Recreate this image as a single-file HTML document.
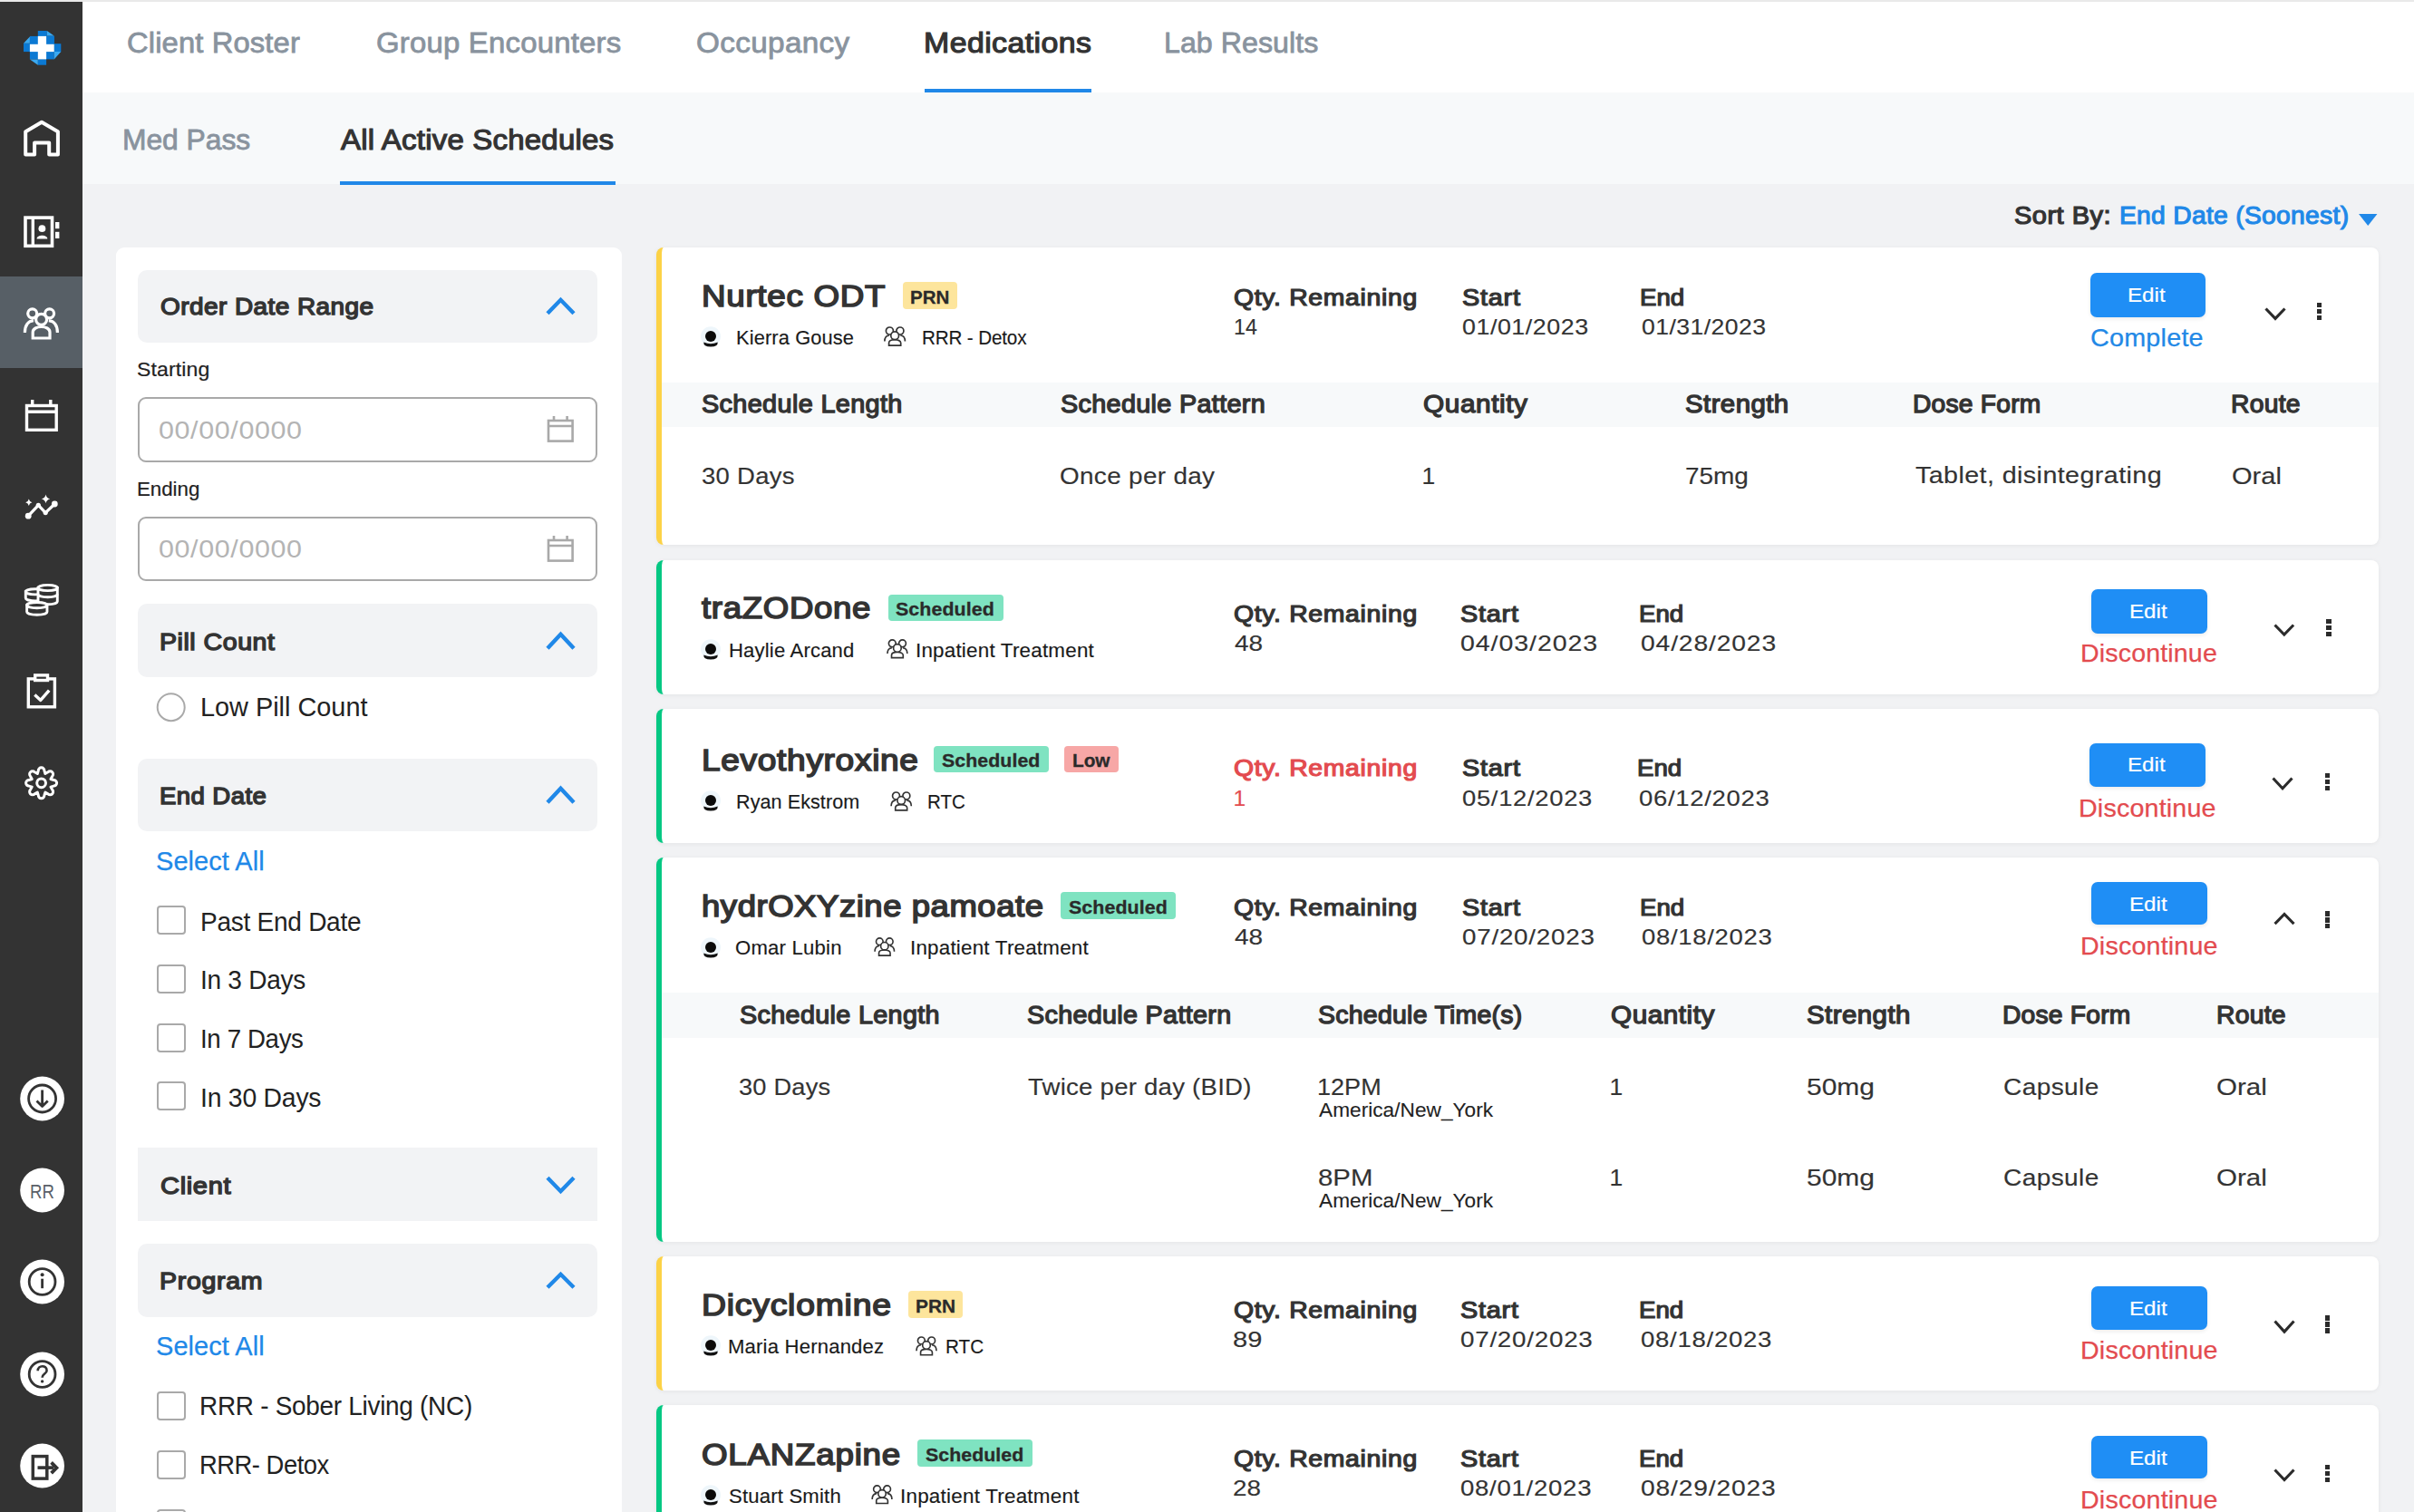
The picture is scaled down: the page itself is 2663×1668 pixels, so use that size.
<!DOCTYPE html>
<html><head><meta charset="utf-8"><title>Medications</title><style>
html,body{margin:0;padding:0}
body{width:2663px;height:1668px;overflow:hidden;position:relative;background:#f1f2f4;font-family:"Liberation Sans",sans-serif}
.t{position:absolute;white-space:nowrap;line-height:1}
.r{position:absolute}
</style></head><body>
<div class="r" style="left:91.0px;top:0.0px;width:2572.0px;height:102.0px;background:#ffffff;"></div>
<div class="r" style="left:0.0px;top:0.0px;width:2663.0px;height:1.5px;background:#e9e9e9;"></div>
<div class="r" style="left:91.0px;top:102.0px;width:2572.0px;height:101.0px;background:#f7f9fa;"></div>
<div class="r" style="left:0.0px;top:2.0px;width:91.0px;height:1666.0px;background:#333333;"></div>
<div class="r" style="left:0.0px;top:305.0px;width:91.0px;height:101.0px;background:#575f66;"></div>
<div class="t" style="left:140.4px;top:30.9px;font-size:32.00px;letter-spacing:0.14px;font-weight:normal;color:#89939e;-webkit-text-stroke:0.8px #89939e;transform:scaleX(1.0224);transform-origin:0 0;">Client Roster</div>
<div class="t" style="left:415.4px;top:30.9px;font-size:32.00px;letter-spacing:0.20px;font-weight:normal;color:#89939e;-webkit-text-stroke:0.8px #89939e;transform:scaleX(1.0285);transform-origin:0 0;">Group Encounters</div>
<div class="t" style="left:768.4px;top:30.9px;font-size:32.00px;letter-spacing:0.33px;font-weight:normal;color:#89939e;-webkit-text-stroke:0.8px #89939e;transform:scaleX(1.0401);transform-origin:0 0;">Occupancy</div>
<div class="t" style="left:1018.5px;top:30.9px;font-size:32.00px;letter-spacing:0.40px;font-weight:normal;color:#333;-webkit-text-stroke:1.2px #333;transform:scaleX(1.0586);transform-origin:0 0;">Medications</div>
<div class="t" style="left:1284.4px;top:30.9px;font-size:32.00px;letter-spacing:0.04px;font-weight:normal;color:#89939e;-webkit-text-stroke:0.8px #89939e;transform:scaleX(1.0051);transform-origin:0 0;">Lab Results</div>
<div class="r" style="left:1020.0px;top:98.0px;width:184.0px;height:4.0px;background:#2088e8;"></div>
<div class="t" style="left:135.4px;top:138.3px;font-size:32.00px;letter-spacing:-0.05px;font-weight:normal;color:#89939e;-webkit-text-stroke:0.8px #89939e;transform:scaleX(0.9946);transform-origin:0 0;">Med Pass</div>
<div class="t" style="left:375.6px;top:138.3px;font-size:32.00px;letter-spacing:0.20px;font-weight:normal;color:#333;-webkit-text-stroke:1.2px #333;transform:scaleX(1.0312);transform-origin:0 0;">All Active Schedules</div>
<div class="r" style="left:375.0px;top:200.0px;width:304.0px;height:4.0px;background:#2088e8;"></div>
<div class="t" style="left:2221.5px;top:225.4px;font-size:26.71px;letter-spacing:0.44px;font-weight:normal;color:#333;-webkit-text-stroke:1.2px #333;transform:scaleX(1.0860);transform-origin:0 0;">Sort By:</div>
<div class="t" style="left:2338.4px;top:225.4px;font-size:26.71px;letter-spacing:0.31px;font-weight:normal;color:#2088e8;-webkit-text-stroke:1.1px #2088e8;transform:scaleX(1.0552);transform-origin:0 0;">End Date (Soonest)</div>
<svg class="r" style="left:2600.5px;top:236.0px;width:22.5px;height:13.0px;" viewBox="0 0 22 14"><path d="M0 0H22L11 14Z" fill="#2088e8"/></svg>
<svg class="r" style="left:22.0px;top:28.0px;width:50.0px;height:50.0px;" viewBox="0 0 50 50">
<rect x="10.9" y="11.9" width="26.8" height="25.5" fill="#0b79d3"/>
<rect x="19.8" y="6" width="10" height="6.2" fill="#0b79d3"/>
<rect x="29.8" y="11.6" width="8" height="8.8" fill="#0b79d3"/>
<rect x="37.5" y="20.2" width="7.8" height="9" fill="#0b79d3"/>
<rect x="19.8" y="37.2" width="9.3" height="6.5" fill="#0b79d3"/>
<rect x="4" y="19.8" width="7.1" height="9.3" fill="#0b79d3"/>
<path d="M29.8 6L37.7 11.6H29.8Z M45.3 29.1L37.7 37.4V29.1Z M19.8 43.7L10.9 37.4H19.8Z M4 19.8L10.9 12.6V19.8Z" fill="#3aa9f2"/>
<rect x="19.8" y="11.9" width="9.3" height="25.5" fill="#fff"/>
<rect x="10.9" y="20.8" width="26.8" height="8.3" fill="#fff"/>
</svg>
<svg class="r" style="left:20.0px;top:128.0px;width:52.0px;height:50.0px;" viewBox="20 128 52 50"><path d="M28.2 170.5V145.2L46 134.8L63.9 145.2V170.5H54.2V157.4H38.1V170.5Z" fill="none" stroke="#fff" stroke-width="4" stroke-linejoin="round"/></svg>
<svg class="r" style="left:20.0px;top:232.0px;width:52.0px;height:48.0px;" viewBox="20 232 52 48"><rect x="28" y="240.1" width="29.5" height="31.2" fill="none" stroke="#fff" stroke-width="3.6"/><rect x="34.6" y="240" width="3.4" height="31" fill="#fff"/><circle cx="46.4" cy="252.2" r="3.9" fill="#fff"/><path d="M40.6 263.6C40.6 258.6 52.3 258.6 52.3 263.6Z" fill="#fff"/><rect x="61" y="245" width="4.4" height="7.2" fill="#fff"/><rect x="61" y="255.8" width="4.4" height="7.2" fill="#fff"/></svg>
<svg class="r" style="left:20.0px;top:334.0px;width:52.0px;height:46.0px;" viewBox="20 334 52 46"><g fill="none" stroke="#fff" stroke-width="3.2"><circle cx="35.7" cy="345.8" r="5"/><circle cx="54.6" cy="345.8" r="5"/><path d="M27.4 367C27.4 359 31 354 37 353.6"/><path d="M63.4 367C63.4 359 59.8 354 53.8 353.6"/><path d="M36.2 373V366.5C36.2 358.5 55 358.5 55 366.5V373Z" fill="#575f66"/><circle cx="45.6" cy="352.4" r="6" fill="#575f66"/></g></svg>
<svg class="r" style="left:20.0px;top:436.0px;width:52.0px;height:46.0px;" viewBox="20 436 52 46"><g fill="none" stroke="#fff" stroke-width="3.4"><rect x="29.5" y="447.5" width="32.7" height="26.8"/><path d="M29.5 454.2H62.2M35.7 441V448M55.8 441V448"/></g></svg>
<svg class="r" style="left:20.0px;top:540.0px;width:52.0px;height:40.0px;" viewBox="20 540 52 40"><g fill="none" stroke="#fff" stroke-width="3.2" stroke-linejoin="round"><path d="M31.2 569.2L42.3 557.3L50.2 565.6L60.3 556"/></g><circle cx="31.2" cy="569.2" r="3.4" fill="#fff"/><circle cx="42.3" cy="557.3" r="2.6" fill="#fff"/><circle cx="50.2" cy="565.6" r="2.6" fill="#fff"/><circle cx="60.3" cy="556" r="3.4" fill="#fff"/><path d="M31.8 550.6Q32.4 553.6 35.4 554.3Q32.4 555 31.8 558Q31.2 555 28.2 554.3Q31.2 553.6 31.8 550.6Z" fill="#fff"/><path d="M50.5 545.5Q51.2 549.6 55.2 550.4Q51.2 551.2 50.5 555.3Q49.8 551.2 45.8 550.4Q49.8 549.6 50.5 545.5Z" fill="#fff"/></svg>
<svg class="r" style="left:20.0px;top:636.0px;width:52.0px;height:52.0px;" viewBox="20 636 52 52"><g stroke="#fff" stroke-width="2.9" fill="#333"><path d="M28.3 652.8V659.8A10.7 3.1 0 0 0 49.7 659.8V652.8Z"/><ellipse cx="39" cy="652.8" rx="10.7" ry="3.1"/><path d="M42 648.5V663.6A10.65 3.1 0 0 0 63.3 663.6V648.5Z"/><ellipse cx="52.65" cy="648.5" rx="10.65" ry="3.1"/><path d="M42 655.6A10.65 3.1 0 0 0 63.3 655.6" fill="none"/><path d="M29.65 667.6V675.1A11.15 3.1 0 0 0 51.95 675.1V667.6Z"/><ellipse cx="40.8" cy="667.6" rx="11.15" ry="3.1"/></g></svg>
<svg class="r" style="left:20.0px;top:738.0px;width:52.0px;height:50.0px;" viewBox="20 738 52 50"><g fill="none" stroke="#fff" stroke-width="3.4"><rect x="31.3" y="748.9" width="29.1" height="30.9"/><rect x="38.7" y="744.9" width="13.8" height="5.6" fill="#333"/><path d="M38.3 766.6L44.8 772.4L54.2 761.6" stroke-linejoin="round"/></g></svg>
<svg class="r" style="left:20.0px;top:838.0px;width:52.0px;height:52.0px;" viewBox="20 838 52 52"><path d="M42.30 850.10A3.3 3.3 0 0 1 48.90 850.10L49.89 853.45L52.95 851.78A3.3 3.3 0 0 1 57.62 856.45L55.95 859.51L59.30 860.50A3.3 3.3 0 0 1 59.30 867.10L55.95 868.09L57.62 871.15A3.3 3.3 0 0 1 52.95 875.82L49.89 874.15L48.90 877.50A3.3 3.3 0 0 1 42.30 877.50L41.31 874.15L38.25 875.82A3.3 3.3 0 0 1 33.58 871.15L35.25 868.09L31.90 867.10A3.3 3.3 0 0 1 31.90 860.50L35.25 859.51L33.58 856.45A3.3 3.3 0 0 1 38.25 851.78L41.31 853.45Z" fill="none" stroke="#fff" stroke-width="3" stroke-linejoin="round"/><circle cx="45.6" cy="863.8" r="4.9" fill="none" stroke="#fff" stroke-width="3"/></svg>
<svg class="r" style="left:18.0px;top:1182.5px;width:58.0px;height:58.0px;" viewBox="18 1182.5 58 58"><circle cx="46.6" cy="1211.5" r="24.4" fill="#fff"/><circle cx="46.6" cy="1211.5" r="15" fill="none" stroke="#333" stroke-width="2.8"/><path d="M46.6 1202V1220M40.5 1214L46.6 1220L52.7 1214" fill="none" stroke="#333" stroke-width="2.8" stroke-linejoin="round"/></svg>
<svg class="r" style="left:18.0px;top:1284.2px;width:58.0px;height:58.0px;" viewBox="18 1284.2 58 58"><circle cx="46.6" cy="1313.2" r="24.4" fill="#fff"/></svg>
<div class="t" style="left:32.8px;top:1303.0px;font-size:22.86px;letter-spacing:0.00px;font-weight:normal;color:#5a6068;transform:scaleX(0.8125);transform-origin:0 0;">RR</div>
<svg class="r" style="left:18.0px;top:1385.3px;width:58.0px;height:58.0px;" viewBox="18 1385.3 58 58"><circle cx="46.6" cy="1414.3" r="24.4" fill="#fff"/><circle cx="46.6" cy="1414.3" r="14.4" fill="none" stroke="#333" stroke-width="2.8"/><circle cx="46.6" cy="1406.6" r="2" fill="#333"/><rect x="45.2" y="1411" width="2.8" height="10.5" fill="#333"/></svg>
<svg class="r" style="left:18.0px;top:1486.9px;width:58.0px;height:58.0px;" viewBox="18 1486.9 58 58"><circle cx="46.6" cy="1515.9" r="24.4" fill="#fff"/><circle cx="46.6" cy="1515.9" r="14.4" fill="none" stroke="#333" stroke-width="2.8"/><path d="M41.7 1512.2C41.7 1505.5 51.6 1505.5 51.6 1511.8C51.6 1515.6 46.6 1515.4 46.6 1519.6" fill="none" stroke="#333" stroke-width="2.6"/><circle cx="46.6" cy="1523.8" r="1.7" fill="#333"/></svg>
<svg class="r" style="left:18.0px;top:1588.0px;width:58.0px;height:58.0px;" viewBox="18 1588 58 58"><circle cx="46.6" cy="1617" r="24.4" fill="#fff"/><rect x="36.3" y="1606.6" width="15.5" height="24.5" fill="none" stroke="#333" stroke-width="3.5"/><path d="M41.5 1619.1H59" stroke="#333" stroke-width="3.6"/><path d="M56.6 1613.4L62.4 1619.3L56.6 1625.2" fill="none" stroke="#333" stroke-width="3.8"/></svg>
<div class="r" style="left:128.0px;top:272.8px;width:558.0px;height:1427.2px;background:#ffffff;border-radius:9px;"></div>
<div class="r" style="left:152.0px;top:298.0px;width:507.0px;height:80.0px;background:#f2f3f5;border-radius:10px;"></div>
<div class="t" style="left:177.1px;top:325.4px;font-size:26.00px;letter-spacing:0.42px;font-weight:normal;color:#333;-webkit-text-stroke:1.4px #333;transform:scaleX(1.0750);transform-origin:0 0;">Order Date Range</div>
<svg class="r" style="left:600.0px;top:326.0px;width:37.0px;height:24.0px;" viewBox="600 326 37 24"><path d="M604 345.8L618.5 330.8L633 345.8" fill="none" stroke="#2088e8" stroke-width="4.4"/></svg>
<div class="t" style="left:151.1px;top:396.6px;font-size:22.43px;letter-spacing:0.13px;font-weight:normal;color:#222;-webkit-text-stroke:0.2px #222;transform:scaleX(1.0277);transform-origin:0 0;">Starting</div>
<div class="r" style="left:152.0px;top:438.0px;width:507.0px;height:71.5px;background:#fff;border:2px solid #a9a9a9;border-radius:9px;box-sizing:border-box;"></div>
<div class="t" style="left:174.5px;top:460.6px;font-size:27.86px;letter-spacing:0.56px;font-weight:normal;color:#b4b4b4;transform:scaleX(1.0937);transform-origin:0 0;">00/00/0000</div>
<svg class="r" style="left:600.0px;top:457.0px;width:37.0px;height:34.0px;" viewBox="600 457 37 34"><g fill="none" stroke="#a9a9a9" stroke-width="2.6"><rect x="605" y="464" width="26.6" height="22.6"/><path d="M605 470H631.6M611 459V465M625.6 459V465"/></g></svg>
<div class="t" style="left:151.1px;top:528.6px;font-size:22.43px;letter-spacing:-0.03px;font-weight:normal;color:#222;-webkit-text-stroke:0.2px #222;transform:scaleX(0.9944);transform-origin:0 0;">Ending</div>
<div class="r" style="left:152.0px;top:569.6px;width:507.0px;height:71.4px;background:#fff;border:2px solid #a9a9a9;border-radius:9px;box-sizing:border-box;"></div>
<div class="t" style="left:174.5px;top:592.4px;font-size:27.86px;letter-spacing:0.56px;font-weight:normal;color:#b4b4b4;transform:scaleX(1.0937);transform-origin:0 0;">00/00/0000</div>
<svg class="r" style="left:600.0px;top:588.5px;width:37.0px;height:34.0px;" viewBox="600 588.5 37 34"><g fill="none" stroke="#a9a9a9" stroke-width="2.6"><rect x="605" y="595.5" width="26.6" height="22.6"/><path d="M605 601.5H631.6M611 590.5V596.5M625.6 590.5V596.5"/></g></svg>
<div class="r" style="left:152.0px;top:666.0px;width:507.0px;height:81.0px;background:#f2f3f5;border-radius:10px;"></div>
<div class="t" style="left:176.0px;top:695.4px;font-size:26.00px;letter-spacing:0.47px;font-weight:normal;color:#333;-webkit-text-stroke:1.4px #333;transform:scaleX(1.0989);transform-origin:0 0;">Pill Count</div>
<svg class="r" style="left:600.0px;top:694.6px;width:37.0px;height:24.4px;" viewBox="600 694.6 37 24.399999999999977"><path d="M604 714.8L618.5 699.4L633 714.8" fill="none" stroke="#2088e8" stroke-width="4.4"/></svg>
<svg class="r" style="left:170.0px;top:762.0px;width:38.0px;height:36.0px;" viewBox="170 762 38 36"><circle cx="188.7" cy="780.2" r="15" fill="none" stroke="#a9a9a9" stroke-width="2"/></svg>
<div class="t" style="left:220.6px;top:766.1px;font-size:29.00px;letter-spacing:-0.02px;font-weight:normal;color:#222;transform:scaleX(0.9965);transform-origin:0 0;">Low Pill Count</div>
<div class="r" style="left:152.0px;top:836.5px;width:507.0px;height:80.5px;background:#f2f3f5;border-radius:10px;"></div>
<div class="t" style="left:176.1px;top:865.4px;font-size:26.00px;letter-spacing:0.37px;font-weight:normal;color:#333;-webkit-text-stroke:1.4px #333;transform:scaleX(1.0611);transform-origin:0 0;">End Date</div>
<svg class="r" style="left:600.0px;top:865.0px;width:37.0px;height:24.5px;" viewBox="600 865 37 24.5"><path d="M604 885.3L618.5 869.8L633 885.3" fill="none" stroke="#2088e8" stroke-width="4.4"/></svg>
<div class="t" style="left:172.1px;top:936.4px;font-size:28.86px;letter-spacing:0.03px;font-weight:normal;color:#2088e8;-webkit-text-stroke:0.25px #2088e8;transform:scaleX(1.0051);transform-origin:0 0;">Select All</div>
<div class="r" style="left:172.6px;top:999.0px;width:32.2px;height:32.2px;background:#fff;border:2px solid #a9a9a9;border-radius:4px;box-sizing:border-box;"></div>
<div class="t" style="left:220.7px;top:1001.8px;font-size:29.29px;letter-spacing:-0.29px;font-weight:normal;color:#222;transform:scaleX(0.9580);transform-origin:0 0;">Past End Date</div>
<div class="r" style="left:172.6px;top:1063.6px;width:32.2px;height:32.2px;background:#fff;border:2px solid #a9a9a9;border-radius:4px;box-sizing:border-box;"></div>
<div class="t" style="left:220.7px;top:1066.4px;font-size:29.29px;letter-spacing:-0.29px;font-weight:normal;color:#222;transform:scaleX(0.9575);transform-origin:0 0;">In 3 Days</div>
<div class="r" style="left:172.6px;top:1128.5px;width:32.2px;height:32.2px;background:#fff;border:2px solid #a9a9a9;border-radius:4px;box-sizing:border-box;"></div>
<div class="t" style="left:220.7px;top:1131.2px;font-size:29.29px;letter-spacing:-0.38px;font-weight:normal;color:#222;transform:scaleX(0.9442);transform-origin:0 0;">In 7 Days</div>
<div class="r" style="left:172.6px;top:1193.0px;width:32.2px;height:32.2px;background:#fff;border:2px solid #a9a9a9;border-radius:4px;box-sizing:border-box;"></div>
<div class="t" style="left:220.7px;top:1195.8px;font-size:29.29px;letter-spacing:-0.22px;font-weight:normal;color:#222;transform:scaleX(0.9677);transform-origin:0 0;">In 30 Days</div>
<div class="r" style="left:152.0px;top:1266.2px;width:507.0px;height:81.2px;background:#f2f3f5;border-radius:0px;"></div>
<div class="t" style="left:177.1px;top:1295.1px;font-size:26.00px;letter-spacing:0.59px;font-weight:normal;color:#333;-webkit-text-stroke:1.4px #333;transform:scaleX(1.1168);transform-origin:0 0;">Client</div>
<svg class="r" style="left:600.0px;top:1295.0px;width:37.0px;height:24.0px;" viewBox="600 1295 37 24"><path d="M604 1299.2L618.5 1314.2L633 1299.2" fill="none" stroke="#2088e8" stroke-width="4.4"/></svg>
<div class="r" style="left:152.0px;top:1372.0px;width:507.0px;height:80.5px;background:#f2f3f5;border-radius:10px;"></div>
<div class="t" style="left:176.0px;top:1400.4px;font-size:26.00px;letter-spacing:0.62px;font-weight:normal;color:#333;-webkit-text-stroke:1.4px #333;transform:scaleX(1.0988);transform-origin:0 0;">Program</div>
<svg class="r" style="left:600.0px;top:1400.8px;width:37.0px;height:23.4px;" viewBox="600 1400.8 37 23.40000000000009"><path d="M604 1420.0L618.5 1405.6L633 1420.0" fill="none" stroke="#2088e8" stroke-width="4.4"/></svg>
<div class="t" style="left:172.1px;top:1471.1px;font-size:28.86px;letter-spacing:0.03px;font-weight:normal;color:#2088e8;-webkit-text-stroke:0.25px #2088e8;transform:scaleX(1.0051);transform-origin:0 0;">Select All</div>
<div class="r" style="left:172.6px;top:1535.0px;width:32.2px;height:32.2px;background:#fff;border:2px solid #a9a9a9;border-radius:4px;box-sizing:border-box;"></div>
<div class="t" style="left:220.4px;top:1535.9px;font-size:29.29px;letter-spacing:-0.30px;font-weight:normal;color:#222;transform:scaleX(0.9545);transform-origin:0 0;">RRR - Sober Living (NC)</div>
<div class="r" style="left:172.6px;top:1599.5px;width:32.2px;height:32.2px;background:#fff;border:2px solid #a9a9a9;border-radius:4px;box-sizing:border-box;"></div>
<div class="t" style="left:220.4px;top:1601.0px;font-size:29.29px;letter-spacing:-0.52px;font-weight:normal;color:#222;transform:scaleX(0.9351);transform-origin:0 0;">RRR- Detox</div>
<div class="r" style="left:172.6px;top:1664.5px;width:32.2px;height:32.2px;background:#fff;border:2px solid #a9a9a9;border-radius:4px;box-sizing:border-box;"></div>
<div class="r" style="left:723.6px;top:272.6px;width:1900.4px;height:328.8px;background:#fff;border-left:6.3px solid #fcd246;border-radius:8px;box-sizing:border-box;box-shadow:0 1px 5px rgba(0,0,0,0.06);"></div>
<div class="t" style="left:773.5px;top:309.3px;font-size:34.14px;letter-spacing:0.63px;font-weight:normal;color:#333333;-webkit-text-stroke:1.6px #333333;transform:scaleX(1.0790);transform-origin:0 0;">Nurtec ODT</div>
<div class="r" style="left:995.6px;top:310.7px;width:60.5px;height:29.9px;background:#fde59c;border-radius:4px;"></div>
<div class="t" style="left:1004.4px;top:317.1px;font-size:21.14px;letter-spacing:0.00px;font-weight:bold;color:#2a2a2a;-webkit-text-stroke:0.3px #2a2a2a;transform:scaleX(0.9729);transform-origin:0 0;">PRN</div>
<svg class="r" style="left:771.7px;top:359.3px;width:24.0px;height:25.0px;" viewBox="771.7 359.3 24 25"><circle cx="783.7" cy="371.6" r="11" fill="#eef6fb"/><circle cx="783.7" cy="371.3" r="6" fill="#0a0a0a"/><path d="M776.0 377.8Q783.7 381.1 791.4000000000001 377.8Q791.9000000000001 382.90000000000003 783.7 382.90000000000003Q775.5 382.90000000000003 776.0 377.8Z" fill="#111"/></svg>
<div class="t" style="left:811.7px;top:363.2px;font-size:21.29px;letter-spacing:0.12px;font-weight:normal;color:#1a1a1a;-webkit-text-stroke:0.15px #1a1a1a;transform:scaleX(1.0261);transform-origin:0 0;">Kierra Gouse</div>
<svg class="r" style="left:974.3px;top:359.0px;width:26.3px;height:24.0px;" viewBox="-1 -1 26.3 24"><g fill="none" stroke="#333" stroke-width="1.7"><circle cx="6.4" cy="5" r="4"/><circle cx="17.9" cy="5" r="4"/><path d="M0.9 16.5C0.9 12.5 3 10.2 6 10"/><path d="M23.4 16.5C23.4 12.5 21.3 10.2 18.3 10"/><path d="M5.6 21.2V18.2C5.6 13.6 18.7 13.6 18.7 18.2V21.2Z" fill="#fff"/><circle cx="12.15" cy="10.2" r="4.4" fill="#fff"/></g></svg>
<div class="t" style="left:1016.8px;top:363.2px;font-size:21.29px;letter-spacing:-0.16px;font-weight:normal;color:#1a1a1a;-webkit-text-stroke:0.15px #1a1a1a;transform:scaleX(0.9707);transform-origin:0 0;">RRR - Detox</div>
<div class="t" style="left:1360.7px;top:315.7px;font-size:25.43px;letter-spacing:0.59px;font-weight:normal;color:#333333;-webkit-text-stroke:1.2px #333333;transform:scaleX(1.1171);transform-origin:0 0;">Qty. Remaining</div>
<div class="t" style="left:1360.6px;top:349.1px;font-size:24.57px;letter-spacing:0.00px;font-weight:normal;color:#333333;-webkit-text-stroke:0.15px #333333;transform:scaleX(0.9450);transform-origin:0 0;">14</div>
<div class="t" style="left:1612.5px;top:315.7px;font-size:25.43px;letter-spacing:0.67px;font-weight:normal;color:#333333;-webkit-text-stroke:1.2px #333333;transform:scaleX(1.1354);transform-origin:0 0;">Start</div>
<div class="t" style="left:1613.4px;top:349.1px;font-size:24.57px;letter-spacing:0.49px;font-weight:normal;color:#333333;-webkit-text-stroke:0.15px #333333;transform:scaleX(1.0920);transform-origin:0 0;">01/01/2023</div>
<div class="t" style="left:1809.0px;top:315.7px;font-size:25.43px;letter-spacing:0.00px;font-weight:normal;color:#333333;-webkit-text-stroke:1.2px #333333;transform:scaleX(1.0880);transform-origin:0 0;">End</div>
<div class="t" style="left:1811.0px;top:349.1px;font-size:24.57px;letter-spacing:0.43px;font-weight:normal;color:#333333;-webkit-text-stroke:0.15px #333333;transform:scaleX(1.0806);transform-origin:0 0;">01/31/2023</div>
<div class="r" style="left:2305.5px;top:301.2px;width:127.6px;height:48.7px;background:#1f8ef5;border-radius:7px;box-shadow:0 2px 4px rgba(0,0,0,0.08);"></div>
<div class="t" style="left:2347.3px;top:315.1px;font-size:21.71px;letter-spacing:0.00px;font-weight:normal;color:#fff;-webkit-text-stroke:0.2px #fff;transform:scaleX(1.1136);transform-origin:0 0;">Edit</div>
<div class="t" style="left:2306.3px;top:358.9px;font-size:27.86px;letter-spacing:0.22px;font-weight:normal;color:#2288e6;-webkit-text-stroke:0.25px #2288e6;transform:scaleX(1.0316);transform-origin:0 0;">Complete</div>
<svg class="r" style="left:2495.0px;top:336.0px;width:30.0px;height:19.9px;" viewBox="2495 336 30 19.899999999999977"><path d="M2499.5 340.5L2510.0 351.4L2520.5 340.5" fill="none" stroke="#2b2b2b" stroke-width="3.1"/></svg>
<div class="r" style="left:2556.0px;top:334.3px;width:5.4px;height:5.2px;background:#2b2b2b;"></div>
<div class="r" style="left:2556.0px;top:341.1px;width:5.4px;height:5.2px;background:#2b2b2b;"></div>
<div class="r" style="left:2556.0px;top:348.0px;width:5.4px;height:5.2px;background:#2b2b2b;"></div>
<div class="r" style="left:723.6px;top:618.0px;width:1900.4px;height:147.8px;background:#fff;border-left:6.3px solid #05c883;border-radius:8px;box-sizing:border-box;box-shadow:0 1px 5px rgba(0,0,0,0.06);"></div>
<div class="t" style="left:774.3px;top:653.4px;font-size:34.14px;letter-spacing:0.61px;font-weight:normal;color:#333333;-webkit-text-stroke:1.6px #333333;transform:scaleX(1.0734);transform-origin:0 0;">traZODone</div>
<div class="r" style="left:979.6px;top:655.5px;width:127.4px;height:29.7px;background:#7fe3c1;border-radius:4px;"></div>
<div class="t" style="left:987.9px;top:661.2px;font-size:21.14px;letter-spacing:0.07px;font-weight:bold;color:#2a2a2a;-webkit-text-stroke:0.3px #2a2a2a;transform:scaleX(1.0131);transform-origin:0 0;">Scheduled</div>
<svg class="r" style="left:771.7px;top:703.6px;width:24.0px;height:25.0px;" viewBox="771.7 703.6 24 25"><circle cx="783.7" cy="715.9" r="11" fill="#eef6fb"/><circle cx="783.7" cy="715.6" r="6" fill="#0a0a0a"/><path d="M776.0 722.1Q783.7 725.4 791.4000000000001 722.1Q791.9000000000001 727.2 783.7 727.2Q775.5 727.2 776.0 722.1Z" fill="#111"/></svg>
<div class="t" style="left:803.5px;top:707.8px;font-size:21.29px;letter-spacing:0.17px;font-weight:normal;color:#1a1a1a;-webkit-text-stroke:0.15px #1a1a1a;transform:scaleX(1.0375);transform-origin:0 0;">Haylie Arcand</div>
<svg class="r" style="left:976.5px;top:704.2px;width:25.8px;height:23.4px;" viewBox="-1 -1 26.3 24"><g fill="none" stroke="#333" stroke-width="1.7"><circle cx="6.4" cy="5" r="4"/><circle cx="17.9" cy="5" r="4"/><path d="M0.9 16.5C0.9 12.5 3 10.2 6 10"/><path d="M23.4 16.5C23.4 12.5 21.3 10.2 18.3 10"/><path d="M5.6 21.2V18.2C5.6 13.6 18.7 13.6 18.7 18.2V21.2Z" fill="#fff"/><circle cx="12.15" cy="10.2" r="4.4" fill="#fff"/></g></svg>
<div class="t" style="left:1010.0px;top:707.8px;font-size:21.29px;letter-spacing:0.21px;font-weight:normal;color:#1a1a1a;-webkit-text-stroke:0.15px #1a1a1a;transform:scaleX(1.0514);transform-origin:0 0;">Inpatient Treatment</div>
<div class="t" style="left:1360.7px;top:664.7px;font-size:25.43px;letter-spacing:0.59px;font-weight:normal;color:#333333;-webkit-text-stroke:1.2px #333333;transform:scaleX(1.1171);transform-origin:0 0;">Qty. Remaining</div>
<div class="t" style="left:1361.6px;top:698.1px;font-size:24.57px;letter-spacing:0.00px;font-weight:normal;color:#333333;-webkit-text-stroke:0.15px #333333;transform:scaleX(1.1384);transform-origin:0 0;">48</div>
<div class="t" style="left:1610.5px;top:664.7px;font-size:25.43px;letter-spacing:0.67px;font-weight:normal;color:#333333;-webkit-text-stroke:1.2px #333333;transform:scaleX(1.1354);transform-origin:0 0;">Start</div>
<div class="t" style="left:1611.4px;top:698.1px;font-size:24.57px;letter-spacing:0.81px;font-weight:normal;color:#333333;-webkit-text-stroke:0.15px #333333;transform:scaleX(1.1607);transform-origin:0 0;">04/03/2023</div>
<div class="t" style="left:1807.6px;top:664.7px;font-size:25.43px;letter-spacing:0.00px;font-weight:normal;color:#333333;-webkit-text-stroke:1.2px #333333;transform:scaleX(1.0880);transform-origin:0 0;">End</div>
<div class="t" style="left:1809.6px;top:698.1px;font-size:24.57px;letter-spacing:0.76px;font-weight:normal;color:#333333;-webkit-text-stroke:0.15px #333333;transform:scaleX(1.1493);transform-origin:0 0;">04/28/2023</div>
<div class="r" style="left:2307.2px;top:649.9px;width:127.6px;height:48.8px;background:#1f8ef5;border-radius:7px;box-shadow:0 2px 4px rgba(0,0,0,0.08);"></div>
<div class="t" style="left:2349.0px;top:663.8px;font-size:21.71px;letter-spacing:0.00px;font-weight:normal;color:#fff;-webkit-text-stroke:0.2px #fff;transform:scaleX(1.1136);transform-origin:0 0;">Edit</div>
<div class="t" style="left:2295.3px;top:707.2px;font-size:27.86px;letter-spacing:0.15px;font-weight:normal;color:#e34b4f;-webkit-text-stroke:0.25px #e34b4f;transform:scaleX(1.0253);transform-origin:0 0;">Discontinue</div>
<svg class="r" style="left:2505.3px;top:685.0px;width:29.6px;height:19.6px;" viewBox="2505.3 685 29.59999999999991 19.600000000000023"><path d="M2509.8 689.5L2520.1000000000004 700.1L2530.4 689.5" fill="none" stroke="#2b2b2b" stroke-width="3.1"/></svg>
<div class="r" style="left:2566.3px;top:683.0px;width:5.4px;height:5.3px;background:#2b2b2b;"></div>
<div class="r" style="left:2566.3px;top:689.9px;width:5.4px;height:5.3px;background:#2b2b2b;"></div>
<div class="r" style="left:2566.3px;top:696.9px;width:5.4px;height:5.3px;background:#2b2b2b;"></div>
<div class="r" style="left:723.6px;top:781.8px;width:1900.4px;height:148.2px;background:#fff;border-left:6.3px solid #05c883;border-radius:8px;box-sizing:border-box;box-shadow:0 1px 5px rgba(0,0,0,0.06);"></div>
<div class="t" style="left:773.5px;top:821.1px;font-size:34.14px;letter-spacing:0.60px;font-weight:normal;color:#333333;-webkit-text-stroke:1.6px #333333;transform:scaleX(1.0879);transform-origin:0 0;">Levothyroxine</div>
<div class="r" style="left:1030.3px;top:823.2px;width:127.0px;height:29.2px;background:#7fe3c1;border-radius:4px;"></div>
<div class="t" style="left:1038.8px;top:828.4px;font-size:21.14px;letter-spacing:0.06px;font-weight:bold;color:#2a2a2a;-webkit-text-stroke:0.3px #2a2a2a;transform:scaleX(1.0098);transform-origin:0 0;">Scheduled</div>
<div class="r" style="left:1174.2px;top:823.2px;width:60.1px;height:29.2px;background:#f7a7a6;border-radius:4px;"></div>
<div class="t" style="left:1182.8px;top:828.4px;font-size:21.14px;letter-spacing:0.00px;font-weight:bold;color:#2a2a2a;-webkit-text-stroke:0.3px #2a2a2a;transform:scaleX(0.9831);transform-origin:0 0;">Low</div>
<svg class="r" style="left:771.7px;top:871.2px;width:24.0px;height:25.0px;" viewBox="771.7 871.2 24 25"><circle cx="783.7" cy="883.5" r="11" fill="#eef6fb"/><circle cx="783.7" cy="883.2" r="6" fill="#0a0a0a"/><path d="M776.0 889.7Q783.7 893.0 791.4000000000001 889.7Q791.9000000000001 894.8000000000001 783.7 894.8000000000001Q775.5 894.8000000000001 776.0 889.7Z" fill="#111"/></svg>
<div class="t" style="left:811.9px;top:875.1px;font-size:21.29px;letter-spacing:0.07px;font-weight:normal;color:#1a1a1a;-webkit-text-stroke:0.15px #1a1a1a;transform:scaleX(1.0135);transform-origin:0 0;">Ryan Ekstrom</div>
<svg class="r" style="left:980.6px;top:871.5px;width:26.4px;height:23.7px;" viewBox="-1 -1 26.3 24"><g fill="none" stroke="#333" stroke-width="1.7"><circle cx="6.4" cy="5" r="4"/><circle cx="17.9" cy="5" r="4"/><path d="M0.9 16.5C0.9 12.5 3 10.2 6 10"/><path d="M23.4 16.5C23.4 12.5 21.3 10.2 18.3 10"/><path d="M5.6 21.2V18.2C5.6 13.6 18.7 13.6 18.7 18.2V21.2Z" fill="#fff"/><circle cx="12.15" cy="10.2" r="4.4" fill="#fff"/></g></svg>
<div class="t" style="left:1022.6px;top:875.1px;font-size:21.29px;letter-spacing:0.00px;font-weight:normal;color:#1a1a1a;-webkit-text-stroke:0.15px #1a1a1a;transform:scaleX(0.9635);transform-origin:0 0;">RTC</div>
<div class="t" style="left:1360.7px;top:835.2px;font-size:25.43px;letter-spacing:0.59px;font-weight:normal;color:#e34b4f;-webkit-text-stroke:1.2px #e34b4f;transform:scaleX(1.1171);transform-origin:0 0;">Qty. Remaining</div>
<div class="t" style="left:1360.6px;top:868.6px;font-size:24.57px;letter-spacing:0.00px;font-weight:normal;color:#e34b4f;-webkit-text-stroke:0.15px #e34b4f;">1</div>
<div class="t" style="left:1612.5px;top:835.2px;font-size:25.43px;letter-spacing:0.67px;font-weight:normal;color:#333333;-webkit-text-stroke:1.2px #333333;transform:scaleX(1.1354);transform-origin:0 0;">Start</div>
<div class="t" style="left:1613.4px;top:868.6px;font-size:24.57px;letter-spacing:0.61px;font-weight:normal;color:#333333;-webkit-text-stroke:0.15px #333333;transform:scaleX(1.1161);transform-origin:0 0;">05/12/2023</div>
<div class="t" style="left:1806.4px;top:835.2px;font-size:25.43px;letter-spacing:0.00px;font-weight:normal;color:#333333;-webkit-text-stroke:1.2px #333333;transform:scaleX(1.0880);transform-origin:0 0;">End</div>
<div class="t" style="left:1808.4px;top:868.6px;font-size:24.57px;letter-spacing:0.62px;font-weight:normal;color:#333333;-webkit-text-stroke:0.15px #333333;transform:scaleX(1.1184);transform-origin:0 0;">06/12/2023</div>
<div class="r" style="left:2305.0px;top:819.5px;width:127.7px;height:48.5px;background:#1f8ef5;border-radius:7px;box-shadow:0 2px 4px rgba(0,0,0,0.08);"></div>
<div class="t" style="left:2346.8px;top:833.4px;font-size:21.71px;letter-spacing:0.00px;font-weight:normal;color:#fff;-webkit-text-stroke:0.2px #fff;transform:scaleX(1.1136);transform-origin:0 0;">Edit</div>
<div class="t" style="left:2292.8px;top:877.8px;font-size:27.86px;letter-spacing:0.17px;font-weight:normal;color:#e34b4f;-webkit-text-stroke:0.25px #e34b4f;transform:scaleX(1.0287);transform-origin:0 0;">Discontinue</div>
<svg class="r" style="left:2503.0px;top:853.8px;width:30.0px;height:20.2px;" viewBox="2503 853.8 30 20.200000000000045"><path d="M2507.5 858.3L2518.0 869.5L2528.5 858.3" fill="none" stroke="#2b2b2b" stroke-width="3.1"/></svg>
<div class="r" style="left:2564.5px;top:852.5px;width:5.4px;height:5.5px;background:#2b2b2b;"></div>
<div class="r" style="left:2564.5px;top:859.6px;width:5.4px;height:5.5px;background:#2b2b2b;"></div>
<div class="r" style="left:2564.5px;top:866.8px;width:5.4px;height:5.5px;background:#2b2b2b;"></div>
<div class="r" style="left:723.6px;top:945.8px;width:1900.4px;height:424.1px;background:#fff;border-left:6.3px solid #05c883;border-radius:8px;box-sizing:border-box;box-shadow:0 1px 5px rgba(0,0,0,0.06);"></div>
<div class="t" style="left:773.6px;top:981.6px;font-size:34.14px;letter-spacing:0.52px;font-weight:normal;color:#333333;-webkit-text-stroke:1.6px #333333;transform:scaleX(1.0690);transform-origin:0 0;">hydrOXYzine pamoate</div>
<div class="r" style="left:1170.1px;top:983.7px;width:127.4px;height:30.1px;background:#7fe3c1;border-radius:4px;"></div>
<div class="t" style="left:1178.7px;top:989.6px;font-size:21.14px;letter-spacing:0.07px;font-weight:bold;color:#2a2a2a;-webkit-text-stroke:0.3px #2a2a2a;transform:scaleX(1.0131);transform-origin:0 0;">Scheduled</div>
<svg class="r" style="left:771.7px;top:1032.8px;width:24.0px;height:25.0px;" viewBox="771.7 1032.8 24 25"><circle cx="783.7" cy="1045.1" r="11" fill="#eef6fb"/><circle cx="783.7" cy="1044.8" r="6" fill="#0a0a0a"/><path d="M776.0 1051.3Q783.7 1054.6 791.4000000000001 1051.3Q791.9000000000001 1056.3999999999999 783.7 1056.3999999999999Q775.5 1056.3999999999999 776.0 1051.3Z" fill="#111"/></svg>
<div class="t" style="left:811.4px;top:1036.3px;font-size:21.29px;letter-spacing:0.20px;font-weight:normal;color:#1a1a1a;-webkit-text-stroke:0.15px #1a1a1a;transform:scaleX(1.0403);transform-origin:0 0;">Omar Lubin</div>
<svg class="r" style="left:962.5px;top:1033.2px;width:25.6px;height:22.9px;" viewBox="-1 -1 26.3 24"><g fill="none" stroke="#333" stroke-width="1.7"><circle cx="6.4" cy="5" r="4"/><circle cx="17.9" cy="5" r="4"/><path d="M0.9 16.5C0.9 12.5 3 10.2 6 10"/><path d="M23.4 16.5C23.4 12.5 21.3 10.2 18.3 10"/><path d="M5.6 21.2V18.2C5.6 13.6 18.7 13.6 18.7 18.2V21.2Z" fill="#fff"/><circle cx="12.15" cy="10.2" r="4.4" fill="#fff"/></g></svg>
<div class="t" style="left:1003.6px;top:1036.3px;font-size:21.29px;letter-spacing:0.21px;font-weight:normal;color:#1a1a1a;-webkit-text-stroke:0.15px #1a1a1a;transform:scaleX(1.0510);transform-origin:0 0;">Inpatient Treatment</div>
<div class="t" style="left:1360.7px;top:988.8px;font-size:25.43px;letter-spacing:0.59px;font-weight:normal;color:#333333;-webkit-text-stroke:1.2px #333333;transform:scaleX(1.1171);transform-origin:0 0;">Qty. Remaining</div>
<div class="t" style="left:1361.6px;top:1022.2px;font-size:24.57px;letter-spacing:0.00px;font-weight:normal;color:#333333;-webkit-text-stroke:0.15px #333333;transform:scaleX(1.1384);transform-origin:0 0;">48</div>
<div class="t" style="left:1612.5px;top:988.8px;font-size:25.43px;letter-spacing:0.67px;font-weight:normal;color:#333333;-webkit-text-stroke:1.2px #333333;transform:scaleX(1.1354);transform-origin:0 0;">Start</div>
<div class="t" style="left:1613.4px;top:1022.2px;font-size:24.57px;letter-spacing:0.67px;font-weight:normal;color:#333333;-webkit-text-stroke:0.15px #333333;transform:scaleX(1.1310);transform-origin:0 0;">07/20/2023</div>
<div class="t" style="left:1809.0px;top:988.8px;font-size:25.43px;letter-spacing:0.00px;font-weight:normal;color:#333333;-webkit-text-stroke:1.2px #333333;transform:scaleX(1.0880);transform-origin:0 0;">End</div>
<div class="t" style="left:1811.0px;top:1022.2px;font-size:24.57px;letter-spacing:0.62px;font-weight:normal;color:#333333;-webkit-text-stroke:0.15px #333333;transform:scaleX(1.1184);transform-origin:0 0;">08/18/2023</div>
<div class="r" style="left:2307.0px;top:972.7px;width:127.7px;height:47.6px;background:#1f8ef5;border-radius:7px;box-shadow:0 2px 4px rgba(0,0,0,0.08);"></div>
<div class="t" style="left:2348.8px;top:986.6px;font-size:21.71px;letter-spacing:0.00px;font-weight:normal;color:#fff;-webkit-text-stroke:0.2px #fff;transform:scaleX(1.1136);transform-origin:0 0;">Edit</div>
<div class="t" style="left:2294.9px;top:1029.6px;font-size:27.86px;letter-spacing:0.17px;font-weight:normal;color:#e34b4f;-webkit-text-stroke:0.25px #e34b4f;transform:scaleX(1.0287);transform-origin:0 0;">Discontinue</div>
<svg class="r" style="left:2505.0px;top:1003.6px;width:30.0px;height:19.7px;" viewBox="2505 1003.6 30 19.699999999999932"><path d="M2509.5 1018.8L2520.0 1008.1L2530.5 1018.8" fill="none" stroke="#2b2b2b" stroke-width="3.1"/></svg>
<div class="r" style="left:2565.0px;top:1005.4px;width:5.4px;height:5.3px;background:#2b2b2b;"></div>
<div class="r" style="left:2565.0px;top:1012.3px;width:5.4px;height:5.3px;background:#2b2b2b;"></div>
<div class="r" style="left:2565.0px;top:1019.1px;width:5.4px;height:5.3px;background:#2b2b2b;"></div>
<div class="r" style="left:723.6px;top:1385.7px;width:1900.4px;height:148.3px;background:#fff;border-left:6.3px solid #fcd246;border-radius:8px;box-sizing:border-box;box-shadow:0 1px 5px rgba(0,0,0,0.06);"></div>
<div class="t" style="left:773.5px;top:1422.4px;font-size:34.14px;letter-spacing:0.68px;font-weight:normal;color:#333333;-webkit-text-stroke:1.6px #333333;transform:scaleX(1.0957);transform-origin:0 0;">Dicyclomine</div>
<div class="r" style="left:1002.0px;top:1424.2px;width:60.3px;height:29.6px;background:#fde59c;border-radius:4px;"></div>
<div class="t" style="left:1010.2px;top:1429.6px;font-size:21.14px;letter-spacing:0.00px;font-weight:bold;color:#2a2a2a;-webkit-text-stroke:0.3px #2a2a2a;transform:scaleX(0.9871);transform-origin:0 0;">PRN</div>
<svg class="r" style="left:771.7px;top:1472.1px;width:24.0px;height:25.0px;" viewBox="771.7 1472.1 24 25"><circle cx="783.7" cy="1484.3999999999999" r="11" fill="#eef6fb"/><circle cx="783.7" cy="1484.1" r="6" fill="#0a0a0a"/><path d="M776.0 1490.6Q783.7 1493.8999999999999 791.4000000000001 1490.6Q791.9000000000001 1495.6999999999998 783.7 1495.6999999999998Q775.5 1495.6999999999998 776.0 1490.6Z" fill="#111"/></svg>
<div class="t" style="left:803.4px;top:1476.3px;font-size:21.29px;letter-spacing:0.18px;font-weight:normal;color:#1a1a1a;-webkit-text-stroke:0.15px #1a1a1a;transform:scaleX(1.0384);transform-origin:0 0;">Maria Hernandez</div>
<svg class="r" style="left:1008.9px;top:1472.5px;width:26.0px;height:23.5px;" viewBox="-1 -1 26.3 24"><g fill="none" stroke="#333" stroke-width="1.7"><circle cx="6.4" cy="5" r="4"/><circle cx="17.9" cy="5" r="4"/><path d="M0.9 16.5C0.9 12.5 3 10.2 6 10"/><path d="M23.4 16.5C23.4 12.5 21.3 10.2 18.3 10"/><path d="M5.6 21.2V18.2C5.6 13.6 18.7 13.6 18.7 18.2V21.2Z" fill="#fff"/><circle cx="12.15" cy="10.2" r="4.4" fill="#fff"/></g></svg>
<div class="t" style="left:1042.6px;top:1476.3px;font-size:21.29px;letter-spacing:0.00px;font-weight:normal;color:#1a1a1a;-webkit-text-stroke:0.15px #1a1a1a;transform:scaleX(0.9706);transform-origin:0 0;">RTC</div>
<div class="t" style="left:1360.7px;top:1432.8px;font-size:25.43px;letter-spacing:0.59px;font-weight:normal;color:#333333;-webkit-text-stroke:1.2px #333333;transform:scaleX(1.1171);transform-origin:0 0;">Qty. Remaining</div>
<div class="t" style="left:1360.4px;top:1466.2px;font-size:24.57px;letter-spacing:0.00px;font-weight:normal;color:#333333;-webkit-text-stroke:0.15px #333333;transform:scaleX(1.1828);transform-origin:0 0;">89</div>
<div class="t" style="left:1610.5px;top:1432.8px;font-size:25.43px;letter-spacing:0.67px;font-weight:normal;color:#333333;-webkit-text-stroke:1.2px #333333;transform:scaleX(1.1354);transform-origin:0 0;">Start</div>
<div class="t" style="left:1611.4px;top:1466.2px;font-size:24.57px;letter-spacing:0.67px;font-weight:normal;color:#333333;-webkit-text-stroke:0.15px #333333;transform:scaleX(1.1304);transform-origin:0 0;">07/20/2023</div>
<div class="t" style="left:1807.6px;top:1432.8px;font-size:25.43px;letter-spacing:0.00px;font-weight:normal;color:#333333;-webkit-text-stroke:1.2px #333333;transform:scaleX(1.0880);transform-origin:0 0;">End</div>
<div class="t" style="left:1809.6px;top:1466.2px;font-size:24.57px;letter-spacing:0.63px;font-weight:normal;color:#333333;-webkit-text-stroke:0.15px #333333;transform:scaleX(1.1224);transform-origin:0 0;">08/18/2023</div>
<div class="r" style="left:2307.0px;top:1418.8px;width:127.7px;height:48.1px;background:#1f8ef5;border-radius:7px;box-shadow:0 2px 4px rgba(0,0,0,0.08);"></div>
<div class="t" style="left:2348.8px;top:1432.7px;font-size:21.71px;letter-spacing:0.00px;font-weight:normal;color:#fff;-webkit-text-stroke:0.2px #fff;transform:scaleX(1.1136);transform-origin:0 0;">Edit</div>
<div class="t" style="left:2294.9px;top:1476.2px;font-size:27.86px;letter-spacing:0.17px;font-weight:normal;color:#e34b4f;-webkit-text-stroke:0.25px #e34b4f;transform:scaleX(1.0287);transform-origin:0 0;">Discontinue</div>
<svg class="r" style="left:2505.0px;top:1453.0px;width:30.0px;height:20.6px;" viewBox="2505 1453 30 20.59999999999991"><path d="M2509.5 1457.5L2520.0 1469.1L2530.5 1457.5" fill="none" stroke="#2b2b2b" stroke-width="3.1"/></svg>
<div class="r" style="left:2565.0px;top:1451.0px;width:5.4px;height:5.6px;background:#2b2b2b;"></div>
<div class="r" style="left:2565.0px;top:1458.2px;width:5.4px;height:5.6px;background:#2b2b2b;"></div>
<div class="r" style="left:2565.0px;top:1465.4px;width:5.4px;height:5.6px;background:#2b2b2b;"></div>
<div class="r" style="left:723.6px;top:1550.4px;width:1900.4px;height:169.6px;background:#fff;border-left:6.3px solid #05c883;border-radius:8px;box-sizing:border-box;box-shadow:0 1px 5px rgba(0,0,0,0.06);"></div>
<div class="t" style="left:773.6px;top:1586.9px;font-size:34.14px;letter-spacing:0.67px;font-weight:normal;color:#333333;-webkit-text-stroke:1.6px #333333;transform:scaleX(1.0782);transform-origin:0 0;">OLANZapine</div>
<div class="r" style="left:1011.8px;top:1588.1px;width:127.3px;height:30.0px;background:#7fe3c1;border-radius:4px;"></div>
<div class="t" style="left:1020.9px;top:1593.9px;font-size:21.14px;letter-spacing:0.05px;font-weight:bold;color:#2a2a2a;-webkit-text-stroke:0.3px #2a2a2a;transform:scaleX(1.0091);transform-origin:0 0;">Scheduled</div>
<svg class="r" style="left:771.7px;top:1636.7px;width:24.0px;height:25.0px;" viewBox="771.7 1636.7 24 25"><circle cx="783.7" cy="1649.0" r="11" fill="#eef6fb"/><circle cx="783.7" cy="1648.7" r="6" fill="#0a0a0a"/><path d="M776.0 1655.2Q783.7 1658.5 791.4000000000001 1655.2Q791.9000000000001 1660.3 783.7 1660.3Q775.5 1660.3 776.0 1655.2Z" fill="#111"/></svg>
<div class="t" style="left:804.1px;top:1640.7px;font-size:21.29px;letter-spacing:0.17px;font-weight:normal;color:#1a1a1a;-webkit-text-stroke:0.15px #1a1a1a;transform:scaleX(1.0397);transform-origin:0 0;">Stuart Smith</div>
<svg class="r" style="left:960.3px;top:1637.0px;width:26.1px;height:23.2px;" viewBox="-1 -1 26.3 24"><g fill="none" stroke="#333" stroke-width="1.7"><circle cx="6.4" cy="5" r="4"/><circle cx="17.9" cy="5" r="4"/><path d="M0.9 16.5C0.9 12.5 3 10.2 6 10"/><path d="M23.4 16.5C23.4 12.5 21.3 10.2 18.3 10"/><path d="M5.6 21.2V18.2C5.6 13.6 18.7 13.6 18.7 18.2V21.2Z" fill="#fff"/><circle cx="12.15" cy="10.2" r="4.4" fill="#fff"/></g></svg>
<div class="t" style="left:993.3px;top:1640.7px;font-size:21.29px;letter-spacing:0.22px;font-weight:normal;color:#1a1a1a;-webkit-text-stroke:0.15px #1a1a1a;transform:scaleX(1.0537);transform-origin:0 0;">Inpatient Treatment</div>
<div class="t" style="left:1360.7px;top:1596.6px;font-size:25.43px;letter-spacing:0.59px;font-weight:normal;color:#333333;-webkit-text-stroke:1.2px #333333;transform:scaleX(1.1171);transform-origin:0 0;">Qty. Remaining</div>
<div class="t" style="left:1360.4px;top:1630.0px;font-size:24.57px;letter-spacing:0.00px;font-weight:normal;color:#333333;-webkit-text-stroke:0.15px #333333;transform:scaleX(1.1321);transform-origin:0 0;">28</div>
<div class="t" style="left:1610.5px;top:1596.6px;font-size:25.43px;letter-spacing:0.67px;font-weight:normal;color:#333333;-webkit-text-stroke:1.2px #333333;transform:scaleX(1.1354);transform-origin:0 0;">Start</div>
<div class="t" style="left:1611.4px;top:1630.0px;font-size:24.57px;letter-spacing:0.64px;font-weight:normal;color:#333333;-webkit-text-stroke:0.15px #333333;transform:scaleX(1.1230);transform-origin:0 0;">08/01/2023</div>
<div class="t" style="left:1807.6px;top:1596.6px;font-size:25.43px;letter-spacing:0.00px;font-weight:normal;color:#333333;-webkit-text-stroke:1.2px #333333;transform:scaleX(1.0880);transform-origin:0 0;">End</div>
<div class="t" style="left:1809.6px;top:1630.0px;font-size:24.57px;letter-spacing:0.74px;font-weight:normal;color:#333333;-webkit-text-stroke:0.15px #333333;transform:scaleX(1.1464);transform-origin:0 0;">08/29/2023</div>
<div class="r" style="left:2307.0px;top:1583.7px;width:127.7px;height:47.6px;background:#1f8ef5;border-radius:7px;box-shadow:0 2px 4px rgba(0,0,0,0.08);"></div>
<div class="t" style="left:2348.8px;top:1597.6px;font-size:21.71px;letter-spacing:0.00px;font-weight:normal;color:#fff;-webkit-text-stroke:0.2px #fff;transform:scaleX(1.1136);transform-origin:0 0;">Edit</div>
<div class="t" style="left:2294.9px;top:1640.7px;font-size:27.86px;letter-spacing:0.17px;font-weight:normal;color:#e34b4f;-webkit-text-stroke:0.25px #e34b4f;transform:scaleX(1.0287);transform-origin:0 0;">Discontinue</div>
<svg class="r" style="left:2505.0px;top:1617.0px;width:30.0px;height:20.0px;" viewBox="2505 1617 30 20"><path d="M2509.5 1621.5L2520.0 1632.5L2530.5 1621.5" fill="none" stroke="#2b2b2b" stroke-width="3.1"/></svg>
<div class="r" style="left:2565.0px;top:1616.0px;width:5.4px;height:5.4px;background:#2b2b2b;"></div>
<div class="r" style="left:2565.0px;top:1623.0px;width:5.4px;height:5.4px;background:#2b2b2b;"></div>
<div class="r" style="left:2565.0px;top:1630.1px;width:5.4px;height:5.4px;background:#2b2b2b;"></div>
<div class="r" style="left:730.0px;top:421.7px;width:1894.0px;height:49.7px;background:#f7f9fa;"></div>
<div class="t" style="left:774.2px;top:432.0px;font-size:27.29px;letter-spacing:0.33px;font-weight:normal;color:#333333;-webkit-text-stroke:1.3px #333333;transform:scaleX(1.0570);transform-origin:0 0;">Schedule Length</div>
<div class="t" style="left:1169.6px;top:432.0px;font-size:27.29px;letter-spacing:0.31px;font-weight:normal;color:#333333;-webkit-text-stroke:1.3px #333333;transform:scaleX(1.0550);transform-origin:0 0;">Schedule Pattern</div>
<div class="t" style="left:1569.6px;top:432.0px;font-size:27.29px;letter-spacing:0.52px;font-weight:normal;color:#333333;-webkit-text-stroke:1.3px #333333;transform:scaleX(1.0925);transform-origin:0 0;">Quantity</div>
<div class="t" style="left:1859.4px;top:432.0px;font-size:27.29px;letter-spacing:0.43px;font-weight:normal;color:#333333;-webkit-text-stroke:1.3px #333333;transform:scaleX(1.0752);transform-origin:0 0;">Strength</div>
<div class="t" style="left:2110.2px;top:432.0px;font-size:27.29px;letter-spacing:0.23px;font-weight:normal;color:#333333;-webkit-text-stroke:1.3px #333333;transform:scaleX(1.0337);transform-origin:0 0;">Dose Form</div>
<div class="t" style="left:2461.1px;top:432.0px;font-size:27.29px;letter-spacing:0.26px;font-weight:normal;color:#333333;-webkit-text-stroke:1.3px #333333;transform:scaleX(1.0359);transform-origin:0 0;">Route</div>
<div class="t" style="left:773.6px;top:512.4px;font-size:26.43px;letter-spacing:0.27px;font-weight:normal;color:#333333;-webkit-text-stroke:0.15px #333333;transform:scaleX(1.0405);transform-origin:0 0;">30 Days</div>
<div class="t" style="left:1169.0px;top:512.4px;font-size:26.43px;letter-spacing:0.32px;font-weight:normal;color:#333333;-webkit-text-stroke:0.15px #333333;transform:scaleX(1.0550);transform-origin:0 0;">Once per day</div>
<div class="t" style="left:1568.6px;top:512.4px;font-size:26.43px;letter-spacing:0.00px;font-weight:normal;color:#333333;-webkit-text-stroke:0.15px #333333;">1</div>
<div class="t" style="left:1858.8px;top:512.4px;font-size:26.43px;letter-spacing:0.00px;font-weight:normal;color:#333333;-webkit-text-stroke:0.15px #333333;transform:scaleX(1.0576);transform-origin:0 0;">75mg</div>
<div class="t" style="left:2112.6px;top:511.4px;font-size:26.43px;letter-spacing:0.38px;font-weight:normal;color:#333333;-webkit-text-stroke:0.15px #333333;transform:scaleX(1.0849);transform-origin:0 0;">Tablet, disintegrating</div>
<div class="t" style="left:2461.5px;top:512.4px;font-size:26.43px;letter-spacing:0.00px;font-weight:normal;color:#333333;-webkit-text-stroke:0.15px #333333;transform:scaleX(1.1000);transform-origin:0 0;">Oral</div>
<div class="r" style="left:730.0px;top:1094.9px;width:1894.0px;height:49.7px;background:#f7f9fa;"></div>
<div class="t" style="left:815.6px;top:1106.0px;font-size:27.29px;letter-spacing:0.32px;font-weight:normal;color:#333333;-webkit-text-stroke:1.3px #333333;transform:scaleX(1.0539);transform-origin:0 0;">Schedule Length</div>
<div class="t" style="left:1133.3px;top:1106.0px;font-size:27.29px;letter-spacing:0.30px;font-weight:normal;color:#333333;-webkit-text-stroke:1.3px #333333;transform:scaleX(1.0530);transform-origin:0 0;">Schedule Pattern</div>
<div class="t" style="left:1454.4px;top:1106.0px;font-size:27.29px;letter-spacing:0.25px;font-weight:normal;color:#333333;-webkit-text-stroke:1.3px #333333;transform:scaleX(1.0429);transform-origin:0 0;">Schedule Time(s)</div>
<div class="t" style="left:1776.6px;top:1106.0px;font-size:27.29px;letter-spacing:0.50px;font-weight:normal;color:#333333;-webkit-text-stroke:1.3px #333333;transform:scaleX(1.0883);transform-origin:0 0;">Quantity</div>
<div class="t" style="left:1993.2px;top:1106.0px;font-size:27.29px;letter-spacing:0.44px;font-weight:normal;color:#333333;-webkit-text-stroke:1.3px #333333;transform:scaleX(1.0773);transform-origin:0 0;">Strength</div>
<div class="t" style="left:2209.2px;top:1106.0px;font-size:27.29px;letter-spacing:0.23px;font-weight:normal;color:#333333;-webkit-text-stroke:1.3px #333333;transform:scaleX(1.0337);transform-origin:0 0;">Dose Form</div>
<div class="t" style="left:2445.4px;top:1106.0px;font-size:27.29px;letter-spacing:0.26px;font-weight:normal;color:#333333;-webkit-text-stroke:1.3px #333333;transform:scaleX(1.0359);transform-origin:0 0;">Route</div>
<div class="t" style="left:815.0px;top:1186.0px;font-size:26.43px;letter-spacing:0.20px;font-weight:normal;color:#333333;-webkit-text-stroke:0.15px #333333;transform:scaleX(1.0302);transform-origin:0 0;">30 Days</div>
<div class="t" style="left:1133.8px;top:1186.0px;font-size:26.43px;letter-spacing:0.23px;font-weight:normal;color:#333333;-webkit-text-stroke:0.15px #333333;transform:scaleX(1.0435);transform-origin:0 0;">Twice per day (BID)</div>
<div class="t" style="left:1452.8px;top:1186.0px;font-size:26.43px;letter-spacing:0.00px;font-weight:normal;color:#333333;-webkit-text-stroke:0.15px #333333;transform:scaleX(1.0237);transform-origin:0 0;">12PM</div>
<div class="t" style="left:1775.6px;top:1186.0px;font-size:26.43px;letter-spacing:0.00px;font-weight:normal;color:#333333;-webkit-text-stroke:0.15px #333333;">1</div>
<div class="t" style="left:1992.5px;top:1186.0px;font-size:26.43px;letter-spacing:0.00px;font-weight:normal;color:#333333;-webkit-text-stroke:0.15px #333333;transform:scaleX(1.1349);transform-origin:0 0;">50mg</div>
<div class="t" style="left:2209.6px;top:1186.0px;font-size:26.43px;letter-spacing:0.39px;font-weight:normal;color:#333333;-webkit-text-stroke:0.15px #333333;transform:scaleX(1.0603);transform-origin:0 0;">Capsule</div>
<div class="t" style="left:2445.0px;top:1186.0px;font-size:26.43px;letter-spacing:0.00px;font-weight:normal;color:#333333;-webkit-text-stroke:0.15px #333333;transform:scaleX(1.1167);transform-origin:0 0;">Oral</div>
<div class="t" style="left:1454.8px;top:1213.7px;font-size:22.57px;letter-spacing:0.02px;font-weight:normal;color:#222;-webkit-text-stroke:0.1px #222;transform:scaleX(1.0042);transform-origin:0 0;">America/New_York</div>
<div class="t" style="left:1453.8px;top:1285.9px;font-size:26.43px;letter-spacing:0.00px;font-weight:normal;color:#333333;-webkit-text-stroke:0.15px #333333;transform:scaleX(1.1117);transform-origin:0 0;">8PM</div>
<div class="t" style="left:1775.6px;top:1285.9px;font-size:26.43px;letter-spacing:0.00px;font-weight:normal;color:#333333;-webkit-text-stroke:0.15px #333333;">1</div>
<div class="t" style="left:1992.5px;top:1285.9px;font-size:26.43px;letter-spacing:0.00px;font-weight:normal;color:#333333;-webkit-text-stroke:0.15px #333333;transform:scaleX(1.1349);transform-origin:0 0;">50mg</div>
<div class="t" style="left:2209.6px;top:1285.9px;font-size:26.43px;letter-spacing:0.39px;font-weight:normal;color:#333333;-webkit-text-stroke:0.15px #333333;transform:scaleX(1.0603);transform-origin:0 0;">Capsule</div>
<div class="t" style="left:2445.0px;top:1285.9px;font-size:26.43px;letter-spacing:0.00px;font-weight:normal;color:#333333;-webkit-text-stroke:0.15px #333333;transform:scaleX(1.1167);transform-origin:0 0;">Oral</div>
<div class="t" style="left:1454.8px;top:1313.6px;font-size:22.57px;letter-spacing:0.02px;font-weight:normal;color:#222;-webkit-text-stroke:0.1px #222;transform:scaleX(1.0042);transform-origin:0 0;">America/New_York</div>
</body></html>
